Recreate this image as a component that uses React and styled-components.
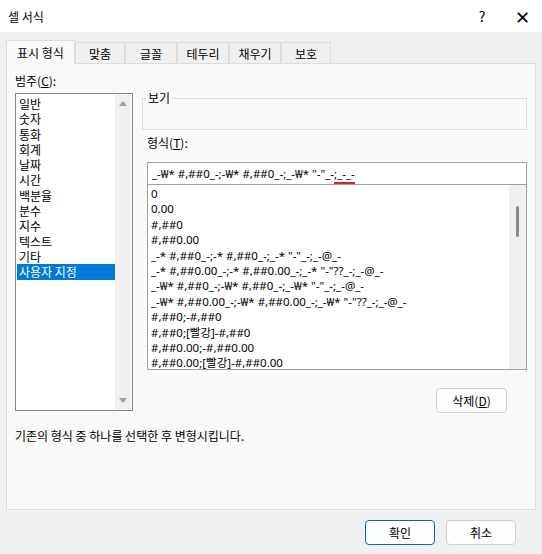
import React from "react";
import styled, { createGlobalStyle } from "styled-components";

const G = createGlobalStyle`
  html,body{margin:0;padding:0;background:#f0f0f0;}
  body{font-family:"Noto Sans CJK KR","Noto Sans",sans-serif;font-size:12px;color:#000;}
`;
const Win = styled.div`width:542px;height:554px;background:#f0f0f0;display:flex;flex-direction:column;overflow:hidden;`;
const Title = styled.div`height:32px;background:#fff;display:flex;align-items:center;padding-left:8px;font-size:12px;`;
const TitleText = styled.div`flex:1;`;
const TBtn = styled.div`width:40px;display:flex;justify-content:center;font-size:14px;`;
const Tabs = styled.div`display:flex;margin:9px 0 0 6px;align-items:flex-end;height:22px;`;
const Tab = styled.div`
  height:${p=>p.$on?24:21}px;width:${p=>p.$w}px;box-sizing:border-box;border:1px solid #dcdcdc;border-bottom:none;
  background:${p=>p.$on?"#f9f9f9":"#f0f0f0"};display:flex;align-items:center;justify-content:center;
  margin-bottom:${p=>p.$on?-1:0}px;position:relative;z-index:${p=>p.$on?1:0};
`;
const Panel = styled.div`margin:0 6px;height:447px;border:1px solid #dcdcdc;background:#f9f9f9;display:flex;flex-direction:column;padding:9px 8px 0 8px;box-sizing:border-box;`;
const Cols = styled.div`display:flex;gap:9px;`;
const Left = styled.div`display:flex;flex-direction:column;width:118px;`;
const Label = styled.div`height:20px;line-height:16px;`;
const Spacer = styled.div`height:${p=>p.$h}px;`;
const ListBox = styled.div`height:318px;border:1px solid #828790;background:#fff;display:flex;box-sizing:border-box;padding:1px;`;
const Items = styled.div`flex:1;padding-top:1px;`;
const Item = styled.div`height:15.3px;line-height:15px;overflow:hidden;padding-left:2px;font-size:12px;background:${p=>p.$sel?"#0078d7":"transparent"};color:${p=>p.$sel?"#fff":"#000"};`;
const VScroll = styled.div`width:16px;background:#f0f0f0;display:flex;flex-direction:column;justify-content:space-between;align-items:center;padding:6px 0;`;
const Arrow = styled.div`width:0;height:0;border-left:4px solid transparent;border-right:4px solid transparent;${p=>p.$up?"border-bottom:5px solid #a0a0a0;":"border-top:5px solid #a0a0a0;"}`;
const Right = styled.div`flex:1;display:flex;flex-direction:column;`;
const Group = styled.fieldset`margin:0;height:38px;border:1px solid #dcdcdc;padding:0;box-sizing:border-box;`;
const Legend = styled.legend`padding:0 2px;margin-left:3px;line-height:12px;`;
const Sub = styled.div`padding-left:5px;display:flex;flex-direction:column;`;
const FLabel = styled.div`margin-top:6px;height:14px;line-height:14px;`;
const Input = styled.div`margin-top:12px;height:23px;border:1px solid #a0a0a0;background:#fff;box-sizing:border-box;padding:0 4px;line-height:21px;font-family:"Noto Sans","Noto Sans CJK KR",sans-serif;font-size:11.5px;white-space:pre;`;
const Red = styled.span`position:relative;&::after{content:"";position:absolute;left:0;right:0;bottom:-3px;height:2px;background:#e02020;}`;
const FList = styled.div`height:185px;border:1px solid #a0a0a0;border-top:none;background:#fff;box-sizing:border-box;display:flex;`;
const FItems = styled.div`flex:1;padding:1px 3px;font-family:"Noto Sans","Noto Sans CJK KR",sans-serif;font-size:11.5px;white-space:pre;overflow:hidden;`;
const FItem = styled.div`height:15.4px;line-height:15.4px;overflow:hidden;`;
const FScroll = styled.div`width:17px;background:#f0f0f0;display:flex;justify-content:center;`;
const Thumb = styled.div`width:3px;height:31px;background:#8a8a8a;border-radius:2px;margin-top:21px;`;
const BtnRow = styled.div`display:flex;justify-content:flex-end;margin-top:18px;padding-right:20px;`;
const Btn = styled.div`width:${p=>p.$w||70}px;height:25px;box-sizing:border-box;border:1px solid ${p=>p.$pri?"#0067c0":"#cfcfcf"};border-radius:4px;background:#fdfdfd;display:flex;align-items:center;justify-content:center;`;
const Desc = styled.div`margin-top:14px;`;
const Footer = styled.div`display:flex;justify-content:flex-end;gap:11px;padding:10px 26px 0 0;`;

const cats=["일반","숫자","통화","회계","날짜","시간","백분율","분수","지수","텍스트","기타","사용자 지정"];
const fmts=["0","0.00","#,##0","#,##0.00",
'_-* #,##0_-;-* #,##0_-;_-* "-"_-;_-@_-',
'_-* #,##0.00_-;-* #,##0.00_-;_-* "-"??_-;_-@_-',
'_-₩* #,##0_-;-₩* #,##0_-;_-₩* "-"_-;_-@_-',
'_-₩* #,##0.00_-;-₩* #,##0.00_-;_-₩* "-"??_-;_-@_-',
"#,##0;-#,##0","#,##0;[빨강]-#,##0","#,##0.00;-#,##0.00","#,##0.00;[빨강]-#,##0.00"];

export default function App(){
  return <Win><G/>
    <Title><TitleText>셀 서식</TitleText><TBtn>?</TBtn><TBtn style={{fontSize:18}}>✕</TBtn></Title>
    <Tabs>
      <Tab $on $w={69}>표시 형식</Tab><Tab $w={50}>맞춤</Tab><Tab $w={52}>글꼴</Tab><Tab $w={52}>테두리</Tab><Tab $w={52}>채우기</Tab><Tab $w={50}>보호</Tab>
    </Tabs>
    <Panel>
      <Cols>
        <Left>
          <Label>범주(<u>C</u>):</Label>
          <ListBox>
            <Items>{cats.map(c=><Item key={c} $sel={c==="사용자 지정"}>{c}</Item>)}</Items>
            <VScroll><Arrow $up/><Arrow/></VScroll>
          </ListBox>
        </Left>
        <Right>
          <Spacer $h={19}/>
          <Group><Legend>보기</Legend></Group>
          <Sub>
            <FLabel>형식(<u>T</u>):</FLabel>
            <Input>{'_-₩* #,##0_-;-₩* #,##0_-;_-₩* "-"_-'}<Red>{';_-_-'}</Red></Input>
            <FList>
              <FItems>{fmts.map(f=><FItem key={f}>{f}</FItem>)}</FItems>
              <FScroll><Thumb/></FScroll>
            </FList>
          </Sub>
          <BtnRow><Btn $w={71}>삭제(<u>D</u>)</Btn></BtnRow>
        </Right>
      </Cols>
      <Desc>기존의 형식 중 하나를 선택한 후 변형시킵니다.</Desc>
    </Panel>
    <Footer><Btn $pri>확인</Btn><Btn>취소</Btn></Footer>
  </Win>;
}
